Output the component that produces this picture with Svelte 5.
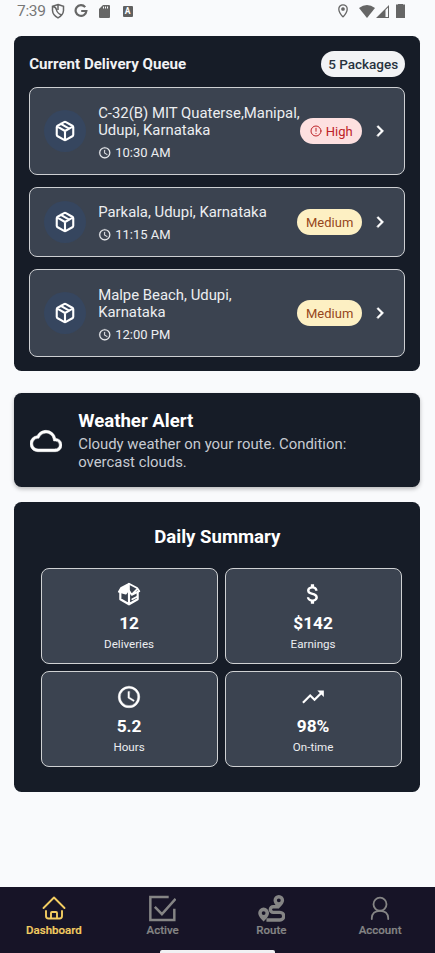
<script>
  const queue = [
    { lines: ['C-32(B) MIT Quaterse,Manipal,', 'Udupi, Karnataka'], time: '10:30 AM', priority: 'High' },
    { lines: ['Parkala, Udupi, Karnataka'], time: '11:15 AM', priority: 'Medium' },
    { lines: ['Malpe Beach, Udupi,', 'Karnataka'], time: '12:00 PM', priority: 'Medium' }
  ];
  const stats = [
    { icon: 'box', value: '12', label: 'Deliveries' },
    { icon: 'dollar', value: '$142', label: 'Earnings' },
    { icon: 'clock', value: '5.2', label: 'Hours' },
    { icon: 'trend', value: '98%', label: 'On-time' }
  ];
  const tabs = [
    { icon: 'home', label: 'Dashboard' },
    { icon: 'check', label: 'Active' },
    { icon: 'route', label: 'Route' },
    { icon: 'user', label: 'Account' }
  ];
</script>

{#snippet icon(name, size)}
  <svg width={size} height={size} viewBox="0 0 24 24" fill="none" stroke="currentColor" stroke-width="2" stroke-linecap="round" stroke-linejoin="round" aria-hidden="true">
    {#if name === 'package'}
      <path stroke-width="2.3" d="M21 8a2 2 0 0 0-1-1.73l-7-4a2 2 0 0 0-2 0l-7 4A2 2 0 0 0 3 8v8a2 2 0 0 0 1 1.73l7 4a2 2 0 0 0 2 0l7-4A2 2 0 0 0 21 16zM3.3 7 12 12l8.7-5M12 22V12M7.5 4.27l9 5.15" />
    {:else if name === 'clock'}
      <path fill="currentColor" stroke="currentColor" stroke-width=".3" d="M12 2a10 10 0 1 0 0 20 10 10 0 0 0 0-20m0 18a8 8 0 1 1 0-16 8 8 0 0 1 0 16m.5-13H11v6l5.2 3.2.8-1.3-4.5-2.7z" />
    {:else if name === 'alert'}
      <circle cx="12" cy="12" r="10" /><path d="M12 6.500v6M12 16.800v.2" />
    {:else if name === 'chevron'}
      <path stroke-width=".5" fill="currentColor" d="M8.6 16.6 13.2 12 8.6 7.4 10 6l6 6-6 6z" />
    {:else if name === 'cloud'}
      <path fill="currentColor" stroke-width=".4" d="M19.35 10.04A7.49 7.49 0 0 0 12 4C9.11 4 6.6 5.64 5.35 8.04A5.994 5.994 0 0 0 0 14c0 3.31 2.69 6 6 6h13c2.76 0 5-2.24 5-5 0-2.64-2.05-4.78-4.65-4.96M19 18H6a4 4 0 0 1-.44-7.97l1.07-.11.5-.95A5.47 5.47 0 0 1 12 6c2.62 0 4.88 1.86 5.39 4.43l.3 1.5 1.53.11A2.98 2.98 0 0 1 22 15c0 1.65-1.35 3-3 3" />
    {:else if name === 'box'}
      <path stroke-width="2" d="M12 9v12.500M4 10v6.800l8 4.700 8-4.700V10" />
      <path fill="currentColor" stroke-width="1.500" d="M12 2.500 4.500 6.500 2.500 10 9 11.800 12 8z" />
      <path stroke-width="1.700" d="M12 2.500 19.500 6.500 21.500 9.500 14.500 12.800 12 9M14.500 12.500 20 7M15 16.800l4.500-2.300" />
    {:else if name === 'dollar'}
      <path fill="currentColor" stroke="none" d="M11.8 10.9c-2.27-.59-3-1.2-3-2.15 0-1.09 1.01-1.85 2.7-1.85 1.78 0 2.44.85 2.5 2.1h2.21c-.07-1.72-1.12-3.3-3.21-3.81V3h-3v2.16c-1.94.42-3.5 1.68-3.5 3.61 0 2.31 1.91 3.46 4.7 4.13 2.5.6 3 1.48 3 2.41 0 .69-.49 1.79-2.7 1.79-2.06 0-2.87-.92-2.98-2.1h-2.2c.12 2.19 1.76 3.42 3.68 3.83V21h3v-2.15c1.95-.37 3.5-1.5 3.5-3.55 0-2.84-2.43-3.81-4.7-4.4" />
    {:else if name === 'trend'}
      <path fill="currentColor" stroke="none" d="m16 6 2.29 2.29-4.88 4.88-4-4L2 16.59 3.41 18l6-6 4 4 6.3-6.29L22 12V6z" />
    {:else if name === 'home'}
      <path stroke-width="1.900" d="M1.500 12 12 1.500 22.500 12M4 15v5Q4 22.500 6.500 22.500h11q2.500 0 2.500-2.500V15M9 22v-5q0-1 1-1h4q1 0 1 1V22" />
    {:else if name === 'check'}
      <path stroke-width="2.200" stroke-linecap="butt" stroke-linejoin="miter" d="M17.500 1.700H1.200v20.600h21.300v-10M5.200 10.500 11.500 17 23.600 3.500" />
    {:else if name === 'route'}
      <path fill="currentColor" fill-rule="evenodd" stroke="none" d="M18.5 0A4.7 4.7 0 0 1 23.2 4.7C23.2 7 20.8 10 18.5 12 16.2 10 13.8 7 13.8 4.7A4.7 4.7 0 0 1 18.5 0m0 3a1.7 1.7 0 1 0 0 3.4 1.7 1.7 0 0 0 0-3.4M5 11.2a4.8 4.8 0 0 1 4.8 4.8c0 2.4-2.5 5.5-4.8 7.5-2.3-2-4.8-5.1-4.8-7.5A4.8 4.8 0 0 1 5 11.2m0 3.2a1.7 1.7 0 1 0 0 3.4 1.7 1.7 0 0 0 0-3.4" />
      <path stroke-width="3" stroke-linecap="butt" d="M18.500 10.400h-5a2.500 2.500 0 0 0 0 5h6a3.300 3.300 0 0 1 0 6.800H7.500" />
    {:else if name === 'user'}
      <path stroke-width="1.800" d="M3.800 23v-1q.4-7.200 8.200-7.200t8.200 7.200v1" /><circle cx="12" cy="8.200" r="6.500" stroke-width="1.800" />
    {/if}
  </svg>
{/snippet}

<div class="screen">
  <header class="status">
    <span class="time">7:39</span>
    <svg width="14" height="16" viewBox="0 0 14 16" fill="none" stroke="currentColor" stroke-width="1.5"><path d="M7 1.5 12.5 3.4V7.5Q12.200 12.200 7 14.800 1.800 12.200 1.500 7.500V3.4zM2 3.5Q5 4 5.500 7t5 5M7 1.5v5.5" /></svg>
    <svg class="google" width="14" height="14" viewBox="0 0 14 14" fill="none" stroke="currentColor" stroke-width="2.2"><path d="M11.2 3.1A5.4 5.4 0 1 0 12.4 7H7.2" /></svg>
    <svg class="sd" width="11" height="13" viewBox="0 0 11 13" fill="currentColor"><path fill-rule="evenodd" d="M4 0h6q1 0 1 1v11q0 1-1 1H1q-1 0-1-1V4zM4 1.5v2h1v-2zM6 1.5v2h1v-2zM8 1.5v2h1v-2z" /></svg>
    <span class="badge">A</span>
    <svg class="pin" width="10" height="14" viewBox="0 0 10 14" fill="none" stroke="currentColor" stroke-width="1.3"><path d="M5 13Q.8 8.5.8 5a4.2 4.2 0 0 1 8.4 0Q9.200 8.500 5 13" /><circle cx="5" cy="5" r="1.2" fill="currentColor" /></svg>
    <svg class="wifi" width="16" height="13" viewBox="0 0 16 13" fill="currentColor"><path d="M0 3Q8-3 16 3L8 13z" /></svg>
    <svg class="signal" width="13" height="13" viewBox="0 0 13 13" fill="currentColor"><path fill-rule="evenodd" d="M13 0v13H0zM9.500 5v7H12V2.500z" /></svg>
    <svg class="battery" width="9" height="14" viewBox="0 0 9 14" fill="currentColor"><path d="M0 .5h2V0h5v.5h2V14H0z" /></svg>
  </header>

  <main>
    <section class="card queue">
      <div class="heading">
        <h2>Current Delivery Queue</h2>
        <span class="count">5 Packages</span>
      </div>
      <ul>
        {#each queue as stop}
          <li class:single={stop.lines.length === 1}>
            <span class="avatar">{@render icon('package', 22)}</span>
            <div class="place">
              <div class="address">{#each stop.lines as line}<div>{line}</div>{/each}</div>
              <div class="eta">{@render icon('clock', 13.5)}<span>{stop.time}</span></div>
            </div>
            <span class="priority" class:high={stop.priority === 'High'}>
              {#if stop.priority === 'High'}{@render icon('alert', 12)}{/if}{stop.priority}
            </span>
            <span class="chevron">{@render icon('chevron', 22)}</span>
          </li>
        {/each}
      </ul>
    </section>

    <section class="card weather">
      {@render icon('cloud', 32)}
      <div>
        <h3>Weather Alert</h3>
        <p>Cloudy weather on your route. Condition:<br />overcast clouds.</p>
      </div>
    </section>

    <section class="card summary">
      <h3>Daily Summary</h3>
      <div class="grid">
        {#each stats as stat}
          <div class="stat">
            {@render icon(stat.icon, 26)}
            <strong>{stat.value}</strong>
            <span>{stat.label}</span>
          </div>
        {/each}
      </div>
    </section>
  </main>

  <nav>
    {#each tabs as tab, i}
      <div class="tab" class:active={i === 0}>
        <div class="glyph">{@render icon(tab.icon, i === 1 || i === 2 ? 27 : 24)}</div>
        <span>{tab.label}</span>
      </div>
    {/each}
    <i class="indicator"></i>
  </nav>
</div>

<style>
  :global(body) { margin: 0; }
  .screen { box-sizing: border-box; width: 435px; height: 953px; overflow: hidden; display: flex; flex-direction: column; background: #f9fafc; font-family: Roboto, "Liberation Sans", sans-serif; color: #f1f2f4; }
  svg { display: block; flex: none; }
  h2, h3, p, ul { margin: 0; padding: 0; }
  .status { box-sizing: border-box; height: 36px; flex: none; display: flex; align-items: center; padding: 0 30px 14px 17px; color: #666; }
  .time { width: 34px; font-size: 15.5px; letter-spacing: -.3px; color: #777; }
  .google { margin-left: 9px; }
  .sd { margin-left: 11px; }
  .badge { margin-left: 12.500px; width: 10px; height: 11px; background: #606060; color: #fff; font-size: 8.500px; line-height: 11px; font-weight: 700; text-align: center; border-radius: 1px; }
  .pin { margin-left: auto; }
  .wifi { margin-left: 11px; }
  .signal { margin-left: 1px; }
  .battery { margin-left: 7px; }
  main { flex: 1; padding: 0 15px 0 14.400px; display: flex; flex-direction: column; }
  .card { box-sizing: border-box; flex: none; background: #161c27; border-radius: 7.500px; }
  .queue { height: 335px; padding: 14.500px 14.600px 0 14.800px; }
  .heading { height: 26px; display: flex; justify-content: space-between; align-items: center; }
  h2 { font-size: 15.100px; font-weight: 700; white-space: nowrap; }
  .count { box-sizing: border-box; height: 26px; width: 84.500px; border-radius: 14px; background: #f2f3f5; color: #27323f; font-size: 13.500px; font-weight: 500; line-height: 26px; text-align: center; white-space: nowrap; }
  ul { list-style: none; margin-top: 10.500px; display: flex; flex-direction: column; gap: 12px; }
  li { box-sizing: border-box; height: 88px; border: 1px solid #cdcfd2; border-radius: 8px; background: #3b4350; display: flex; align-items: center; padding: 0 13px 0 13.400px; }
  li.single { height: 70px; margin-bottom: .4px; }
  .avatar { width: 42px; height: 42px; flex: none; border-radius: 50%; background: #36465f; display: flex; align-items: center; justify-content: center; color: #fff; }
  .place { flex: 1; min-width: 0; padding: 3.600px 0 0 12.600px; white-space: nowrap; }
  .address { font-size: 14.880px; line-height: 17.500px; color: #eceef0; }
  .eta { margin-top: 4.500px; display: flex; align-items: center; gap: 3.500px; font-size: 13px; line-height: 17px; color: #eceef0; }
  .priority { box-sizing: border-box; height: 26px; width: 64.500px; flex: none; border-radius: 13px; background: #fdf0c3; color: #96471b; font-size: 13px; display: flex; align-items: center; justify-content: center; gap: 4px; }
  .priority.high { width: 61.500px; background: #fde0e0; color: #bd2227; }
  .chevron { color: #fff; margin-left: 7.500px; }
  .weather { height: 94px; margin-top: 22px; padding: 1.500px 16px 0 15.800px; display: flex; align-items: center; gap: 16px; box-shadow: 0 2px 4px #0004; color: #fff; }
  .weather h3 { font-size: 18.600px; line-height: 23px; white-space: nowrap; }
  .weather p { margin-top: 3px; font-size: 14.900px; line-height: 17.500px; color: #c7cbd2; white-space: nowrap; }
  .summary { height: 290px; margin-top: 15px; padding: 24px 18px 0 26.200px; }
  .summary h3 { font-size: 18.600px; line-height: 23px; padding-right: 8px; text-align: center; color: #fff; }
  .grid { margin-top: 19px; display: grid; grid-template-columns: 177px 177px; gap: 7px; }
  .stat { box-sizing: border-box; height: 96px; border: 1px solid #cfd1d3; border-radius: 8px; background: #3b4350; display: flex; flex-direction: column; align-items: center; padding-top: 11.500px; color: #fff; }
  .stat strong { margin-top: 6.500px; font-size: 17.300px; line-height: 21px; }
  .stat span { font-size: 11.600px; line-height: 18px; margin-top: 1px; color: #eceef0; }
  nav { position: relative; height: 66px; flex: none; display: flex; background: #171427; color: #858585; }
  .tab { width: 25%; display: flex; flex-direction: column; align-items: center; padding-top: 7px; }
  .glyph { height: 28px; display: flex; align-items: center; padding-right: 1.500px; }
  .tab span { margin-top: .8px; margin-right: 1px; font-size: 11.500px; line-height: 15px; font-weight: 500; -webkit-text-stroke: .2px currentColor; }
  .tab.active { color: #f3cd62; }
  .indicator { position: absolute; left: 160px; bottom: 0; width: 115px; height: 3.500px; background: #f1f1f3; border-radius: 2px 2px 0 0; }
</style>
